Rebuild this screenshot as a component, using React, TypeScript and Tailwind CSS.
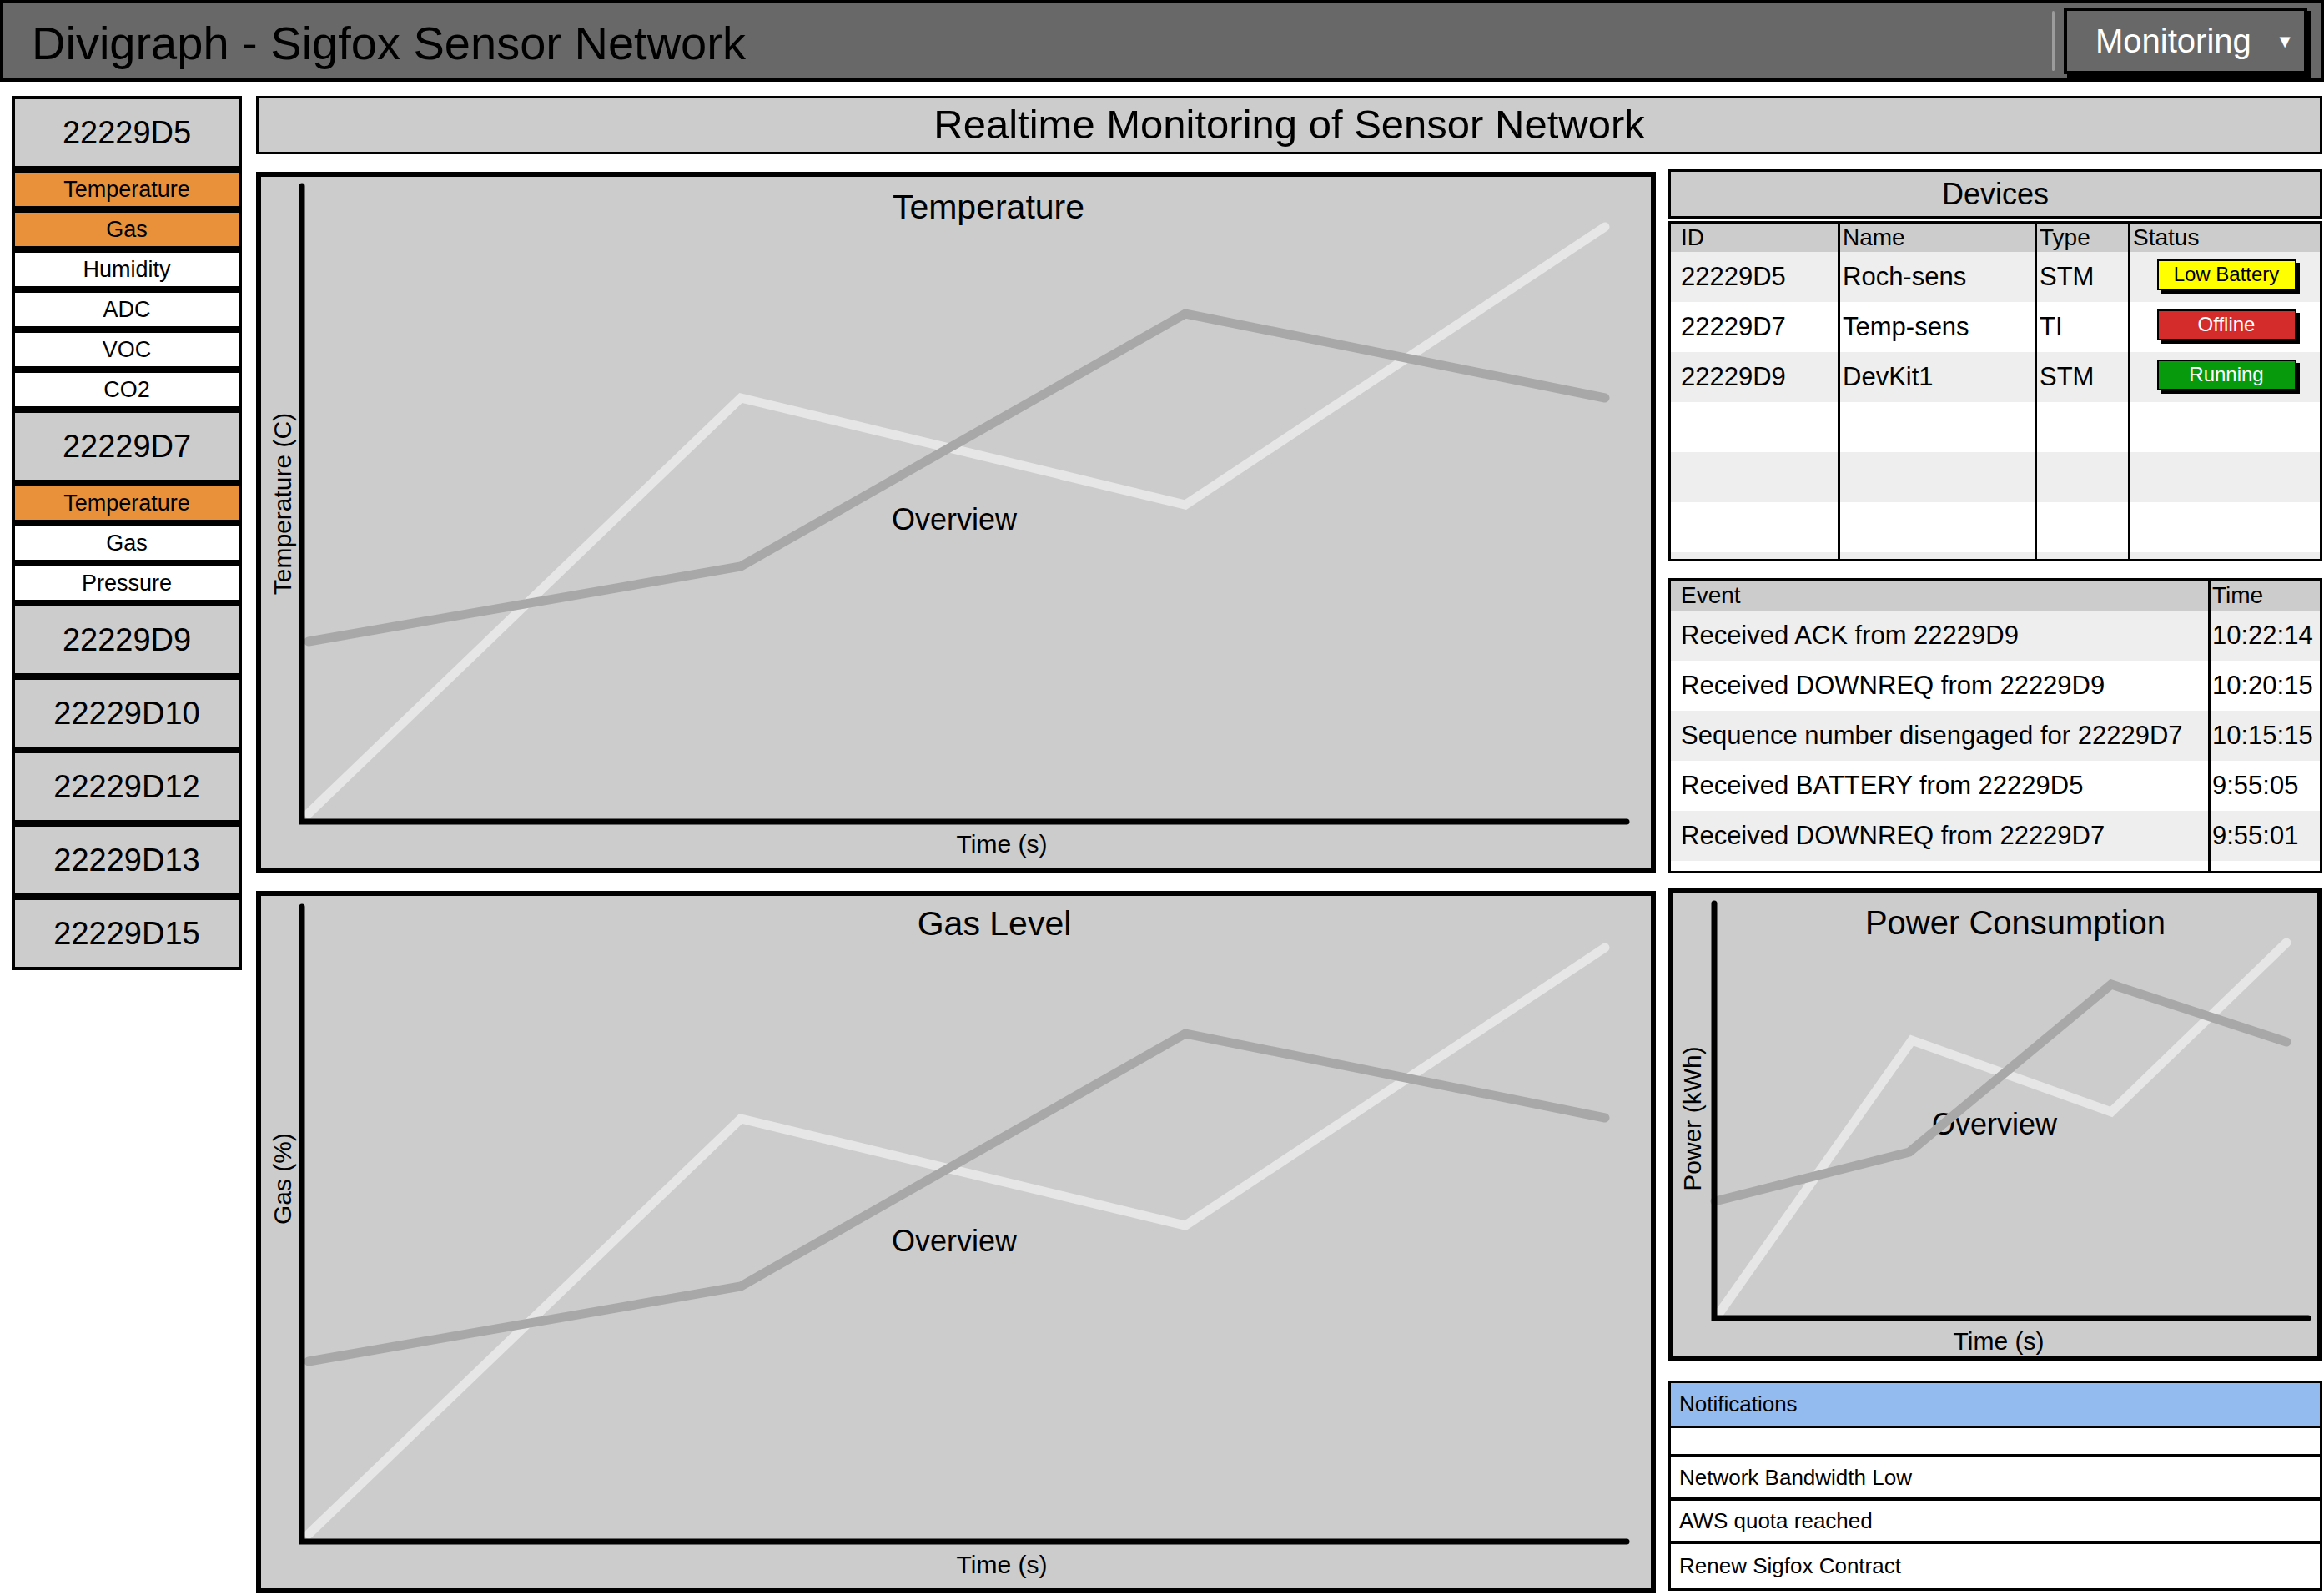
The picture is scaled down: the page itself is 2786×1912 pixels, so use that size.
const FONT = "font-['Liberation_Sans',Arial,sans-serif]";

type Pt = [number, number];

type ChartSpec = {
  w: number;
  h: number;
  axisX: number;
  axisTop: number;
  axisY: number;
  axisRight: number;
  light: Pt[];
  dark: Pt[];
  lineWidth: number;
  title: string;
  titleSize: number;
  titleAt: Pt;
  overviewAt: Pt;
  yLabel: string;
  yLabelAt: Pt;
  xLabelAt: Pt;
};

const devices = [
  {
    id: "22229D5",
    sensors: [
      { label: "Temperature", on: true },
      { label: "Gas", on: true },
      { label: "Humidity" },
      { label: "ADC" },
      { label: "VOC" },
      { label: "CO2" },
    ],
  },
  {
    id: "22229D7",
    sensors: [{ label: "Temperature", on: true }, { label: "Gas" }, { label: "Pressure" }],
  },
  { id: "22229D9", sensors: [] },
  { id: "22229D10", sensors: [] },
  { id: "22229D12", sensors: [] },
  { id: "22229D13", sensors: [] },
  { id: "22229D15", sensors: [] },
];

const deviceRows = [
  { id: "22229D5", name: "Roch-sens", type: "STM", status: "Low Battery", badge: "bg-[#ffff00] text-black" },
  { id: "22229D7", name: "Temp-sens", type: "TI", status: "Offline", badge: "bg-[#d42b2b] text-white" },
  { id: "22229D9", name: "DevKit1", type: "STM", status: "Running", badge: "bg-[#079a0c] text-white" },
];

const events = [
  ["Received ACK from 22229D9", "10:22:14"],
  ["Received DOWNREQ from 22229D9", "10:20:15"],
  ["Sequence number disengaged for 22229D7", "10:15:15"],
  ["Received BATTERY from 22229D5", "9:55:05"],
  ["Received DOWNREQ from 22229D7", "9:55:01"],
];

// row heights include the black separator under each row
const notifications = [
  { text: "Network Bandwidth Low", h: "h-[52px] border-b-4" },
  { text: "AWS quota reached", h: "h-[52px] border-b-4" },
  { text: "Renew Sigfox Contract", h: "h-[53px]" },
];

const bigLight: Pt[] = [
  [57, 763],
  [575, 265],
  [1108, 393],
  [1611, 60],
];
const bigDark: Pt[] = [
  [57, 557],
  [575, 467],
  [1108, 164],
  [1611, 265],
];

const tempChart: ChartSpec = {
  w: 1666,
  h: 829,
  axisX: 49,
  axisTop: 11,
  axisY: 773,
  axisRight: 1637,
  light: bigLight,
  dark: bigDark,
  lineWidth: 11,
  title: "Temperature",
  titleSize: 41,
  titleAt: [872, 36],
  overviewAt: [831, 410],
  yLabel: "Temperature (C)",
  yLabelAt: [25, 392],
  xLabelAt: [888, 799],
};

const gasChart: ChartSpec = {
  ...tempChart,
  h: 830,
  axisTop: 13,
  axisY: 774,
  light: bigLight.map(([x, y]) => [x, y + 2] as Pt),
  dark: bigDark.map(([x, y]) => [x, y + 1] as Pt),
  title: "Gas Level",
  titleAt: [879, 33],
  overviewAt: [831, 413],
  yLabel: "Gas (%)",
  yLabelAt: [25, 339],
  xLabelAt: [888, 801],
};

const powerChart: ChartSpec = {
  w: 772,
  h: 555,
  axisX: 49,
  axisTop: 12,
  axisY: 509,
  axisRight: 761,
  light: [
    [55, 503],
    [286, 176],
    [525, 262],
    [735, 59],
  ],
  dark: [
    [50, 369],
    [283, 310],
    [525, 109],
    [735, 178],
  ],
  lineWidth: 11,
  title: "Power Consumption",
  titleSize: 40,
  titleAt: [410, 35],
  overviewAt: [385, 276],
  yLabel: "Power (kWh)",
  yLabelAt: [22, 270],
  xLabelAt: [390, 536],
};

function toPoints(pts: Pt[]) {
  return pts.map(([x, y]) => `${x},${y}`).join(" ");
}

function ChartPanel({ spec, className }: { spec: ChartSpec; className: string }) {
  const family = "'Liberation Sans', Arial, sans-serif";
  return (
    <div className={`border-[6px] border-black bg-[#cccccc] ${className}`}>
      <svg width={spec.w} height={spec.h} viewBox={`0 0 ${spec.w} ${spec.h}`} className="block">
        <text x={spec.titleAt[0]} y={spec.titleAt[1]} textAnchor="middle" dominantBaseline="central" fontFamily={family} fontSize={spec.titleSize}>
          {spec.title}
        </text>
        <text x={spec.overviewAt[0]} y={spec.overviewAt[1]} textAnchor="middle" dominantBaseline="central" fontFamily={family} fontSize="36">
          Overview
        </text>
        <text
          x={spec.yLabelAt[0]}
          y={spec.yLabelAt[1]}
          textAnchor="middle"
          dominantBaseline="central"
          fontFamily={family}
          fontSize="30"
          transform={`rotate(-90 ${spec.yLabelAt[0]} ${spec.yLabelAt[1]})`}
        >
          {spec.yLabel}
        </text>
        <text x={spec.xLabelAt[0]} y={spec.xLabelAt[1]} textAnchor="middle" dominantBaseline="central" fontFamily={family} fontSize="30">
          Time (s)
        </text>
        <polyline points={toPoints(spec.light)} fill="none" stroke="#e6e6e6" strokeWidth={spec.lineWidth} strokeLinecap="round" strokeLinejoin="miter" />
        <polyline points={toPoints(spec.dark)} fill="none" stroke="#a8a8a8" strokeWidth={spec.lineWidth} strokeLinecap="round" strokeLinejoin="miter" />
        <polyline
          points={`${spec.axisX},${spec.axisTop} ${spec.axisX},${spec.axisY} ${spec.axisRight},${spec.axisY}`}
          fill="none"
          stroke="#000"
          strokeWidth="7"
          strokeLinecap="round"
          strokeLinejoin="miter"
        />
      </svg>
    </div>
  );
}

function Sidebar() {
  return (
    <aside className="flex w-[276px] flex-col">
      {devices.map((device) => (
        <div key={device.id} className="flex flex-col">
          <div className="flex h-[88px] items-center justify-center border-4 border-black bg-[#cccccc] text-[38px]">
            {device.id}
          </div>
          {device.sensors.map((sensor) => (
            <div
              key={sensor.label}
              className={`flex h-[48px] items-center justify-center border-4 border-black text-[27px] ${
                sensor.on ? "bg-[#e8913a]" : "bg-white"
              }`}
            >
              {sensor.label}
            </div>
          ))}
        </div>
      ))}
    </aside>
  );
}

function DevicesTable() {
  const cols = "grid grid-cols-[200px_236px_112px_1fr]";
  const cell = "border-l-[3px] border-black pl-[3px]";
  return (
    <div className="mt-[3px] flex h-[408px] flex-col overflow-hidden border-[3px] border-black">
      <div className={`${cols} h-[34px] items-stretch bg-[#cccccc] text-[28px] leading-[34px]`}>
        <div className="pl-[12px]">ID</div>
        <div className={cell}>Name</div>
        <div className={cell}>Type</div>
        <div className={cell}>Status</div>
      </div>
      {[0, 1, 2, 3, 4, 5].map((i) => {
        const row = deviceRows[i];
        return (
          <div key={i} className={`${cols} h-[60px] text-[31px] ${i % 2 === 0 ? "bg-[#eeeeee]" : "bg-white"}`}>
            <div className="flex items-center pl-[12px]">{row?.id}</div>
            <div className={`${cell} flex items-center`}>{row?.name}</div>
            <div className={`${cell} flex items-center`}>{row?.type}</div>
            <div className={`${cell} flex items-center justify-center pb-[6px]`}>
              {row && (
                <span
                  className={`flex h-[37px] w-[167px] items-center justify-center border-2 border-black text-[24px] shadow-[4px_4px_0_0_#000] ${row.badge}`}
                >
                  {row.status}
                </span>
              )}
            </div>
          </div>
        );
      })}
      <div className={`${cols} flex-1 bg-[#eeeeee]`}>
        <div />
        <div className={cell} />
        <div className={cell} />
        <div className={cell} />
      </div>
    </div>
  );
}

function EventsTable() {
  const cols = "grid grid-cols-[644px_1fr]";
  return (
    <div className="mt-[20px] flex h-[354px] flex-col overflow-hidden border-[3px] border-black">
      <div className={`${cols} h-[36px] bg-[#cccccc] text-[28px] leading-[36px]`}>
        <div className="pl-[12px]">Event</div>
        <div className="border-l-[3px] border-black pl-[2px]">Time</div>
      </div>
      {events.map(([event, time], i) => (
        <div key={time} className={`${cols} h-[60px] text-[31px] ${i % 2 === 0 ? "bg-[#eeeeee]" : "bg-white"}`}>
          <div className="flex items-center pl-[12px]">{event}</div>
          <div className="flex items-center border-l-[3px] border-black pl-[2px]">{time}</div>
        </div>
      ))}
      <div className={`${cols} flex-1 bg-white`}>
        <div />
        <div className="border-l-[3px] border-black" />
      </div>
    </div>
  );
}

function Notifications() {
  return (
    <div className="mt-[23px] flex flex-col border-[3px] border-black text-[26px]">
      <div className="flex h-[54px] items-center border-b-[3px] border-black bg-[#93bbf0] pl-[10px]">Notifications</div>
      <div className="h-[35px] border-b-4 border-black bg-white" />
      {notifications.map((note) => (
        <div key={note.text} className={`flex items-center border-black bg-white pl-[10px] ${note.h}`}>
          {note.text}
        </div>
      ))}
    </div>
  );
}

export default function App() {
  return (
    <div className={`${FONT} h-[1912px] w-[2786px] bg-white text-black`}>
      <header className="flex h-[98px] items-center justify-between border-4 border-black bg-[#686868] pl-[34px] pr-[16px]">
        <h1 className="pt-[6px] text-[56px] leading-none">Divigraph - Sigfox Sensor Network</h1>
        <div className="flex items-center gap-[11px]">
          <div className="h-[72px] w-[3px] rounded bg-[#9c9c9c]" />
          <button
            type="button"
            className="flex h-[80px] w-[292px] items-center justify-between border-4 border-black bg-[#686868] pl-[34px] pr-[12px] text-[40px] text-white shadow-[4px_4px_0_0_#000]"
          >
            Monitoring
            <span className="text-[22px]">▼</span>
          </button>
        </div>
      </header>

      <div className="flex pl-[14px] pt-[17px]">
        <Sidebar />
        <main className="ml-[17px] flex w-[2477px] flex-col">
          <div className="flex h-[70px] items-center justify-center border-[3px] border-black bg-[#cccccc] text-[49px]">
            Realtime Monitoring of Sensor Network
          </div>
          <div className="mt-[18px] flex gap-[15px]">
            <div className="flex w-[1678px] flex-col gap-[21px] pt-[3px]">
              <ChartPanel spec={tempChart} className="h-[841px]" />
              <ChartPanel spec={gasChart} className="h-[842px]" />
            </div>
            <div className="flex w-[784px] flex-col">
              <div className="flex h-[59px] items-center justify-center border-[3px] border-black bg-[#cccccc] text-[36px]">
                Devices
              </div>
              <DevicesTable />
              <EventsTable />
              <ChartPanel spec={powerChart} className="mt-[18px] h-[567px]" />
              <Notifications />
            </div>
          </div>
        </main>
      </div>
    </div>
  );
}
